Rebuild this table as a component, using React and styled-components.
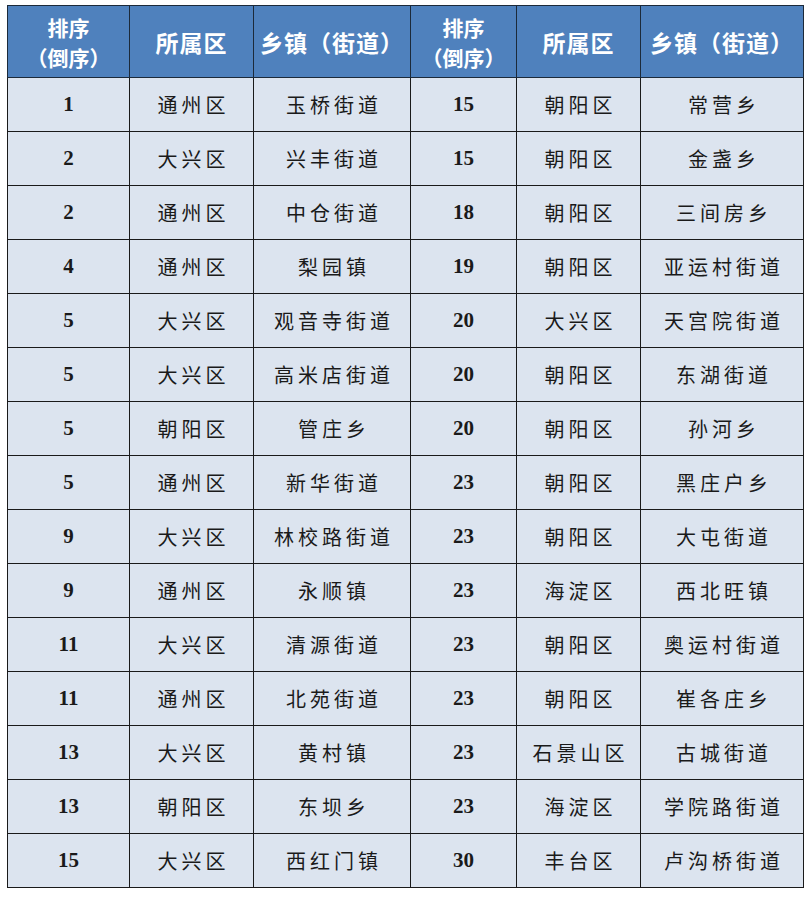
import styled, { createGlobalStyle } from "styled-components";

const GlobalStyle = createGlobalStyle`
  body {
    margin: 0;
    background: #ffffff;
    font-family: "Noto Sans CJK SC", sans-serif;
  }
`;

const Page = styled.div`
  padding: 5px 5px 0 7px;
`;

const Table = styled.table`
  border-collapse: collapse;
  table-layout: fixed;
  width: 796px;
`;

const HeadCell = styled.th`
  height: 71px;
  background: #4f81bd;
  color: #ffffff;
  border: 1px solid #1c2a3a;
  font-family: "Noto Sans CJK SC", sans-serif;
  font-weight: 700;
  font-size: ${(p) => (p.$small ? "21px" : "23px")};
  line-height: ${(p) => (p.$small ? "30px" : "30px")};
  letter-spacing: ${(p) => (p.$small ? "0" : "1px")};
  text-align: center;
  padding: 0;
`;

const Cell = styled.td`
  height: 53px;
  background: #dce4ef;
  border: 1px solid #1a1a1a;
  color: #1a1a1a;
  text-align: center;
  padding: 0;
  font-size: ${(p) => (p.$num ? "21px" : "20px")};
  font-family: ${(p) =>
    p.$num
      ? '"Liberation Serif", serif'
      : '"Noto Sans CJK SC", sans-serif'};
  font-weight: ${(p) => (p.$num ? 700 : 400)};
  letter-spacing: ${(p) => (p.$num ? "0" : "4px")};
  text-indent: ${(p) => (p.$num ? "0" : "4px")};
`;

const widths = [122, 124, 157, 106, 124, 163];

const rows = [
  ["1", "通州区", "玉桥街道", "15", "朝阳区", "常营乡"],
  ["2", "大兴区", "兴丰街道", "15", "朝阳区", "金盏乡"],
  ["2", "通州区", "中仓街道", "18", "朝阳区", "三间房乡"],
  ["4", "通州区", "梨园镇", "19", "朝阳区", "亚运村街道"],
  ["5", "大兴区", "观音寺街道", "20", "大兴区", "天宫院街道"],
  ["5", "大兴区", "高米店街道", "20", "朝阳区", "东湖街道"],
  ["5", "朝阳区", "管庄乡", "20", "朝阳区", "孙河乡"],
  ["5", "通州区", "新华街道", "23", "朝阳区", "黑庄户乡"],
  ["9", "大兴区", "林校路街道", "23", "朝阳区", "大屯街道"],
  ["9", "通州区", "永顺镇", "23", "海淀区", "西北旺镇"],
  ["11", "大兴区", "清源街道", "23", "朝阳区", "奥运村街道"],
  ["11", "通州区", "北苑街道", "23", "朝阳区", "崔各庄乡"],
  ["13", "大兴区", "黄村镇", "23", "石景山区", "古城街道"],
  ["13", "朝阳区", "东坝乡", "23", "海淀区", "学院路街道"],
  ["15", "大兴区", "西红门镇", "30", "丰台区", "卢沟桥街道"],
];

function HeaderGroup() {
  return (
    <>
      <HeadCell $small>
        排序
        <br />
        （倒序）
      </HeadCell>
      <HeadCell>所属区</HeadCell>
      <HeadCell>乡镇（街道）</HeadCell>
    </>
  );
}

export default function App() {
  return (
    <Page>
      <GlobalStyle />
      <Table>
        <colgroup>
          {widths.map((w, i) => (
            <col key={i} style={{ width: w }} />
          ))}
        </colgroup>
        <thead>
          <tr>
            <HeaderGroup />
            <HeaderGroup />
          </tr>
        </thead>
        <tbody>
          {rows.map((r, i) => (
            <tr key={i}>
              {r.map((v, j) => (
                <Cell key={j} $num={j % 3 === 0}>
                  {v}
                </Cell>
              ))}
            </tr>
          ))}
        </tbody>
      </Table>
    </Page>
  );
}
